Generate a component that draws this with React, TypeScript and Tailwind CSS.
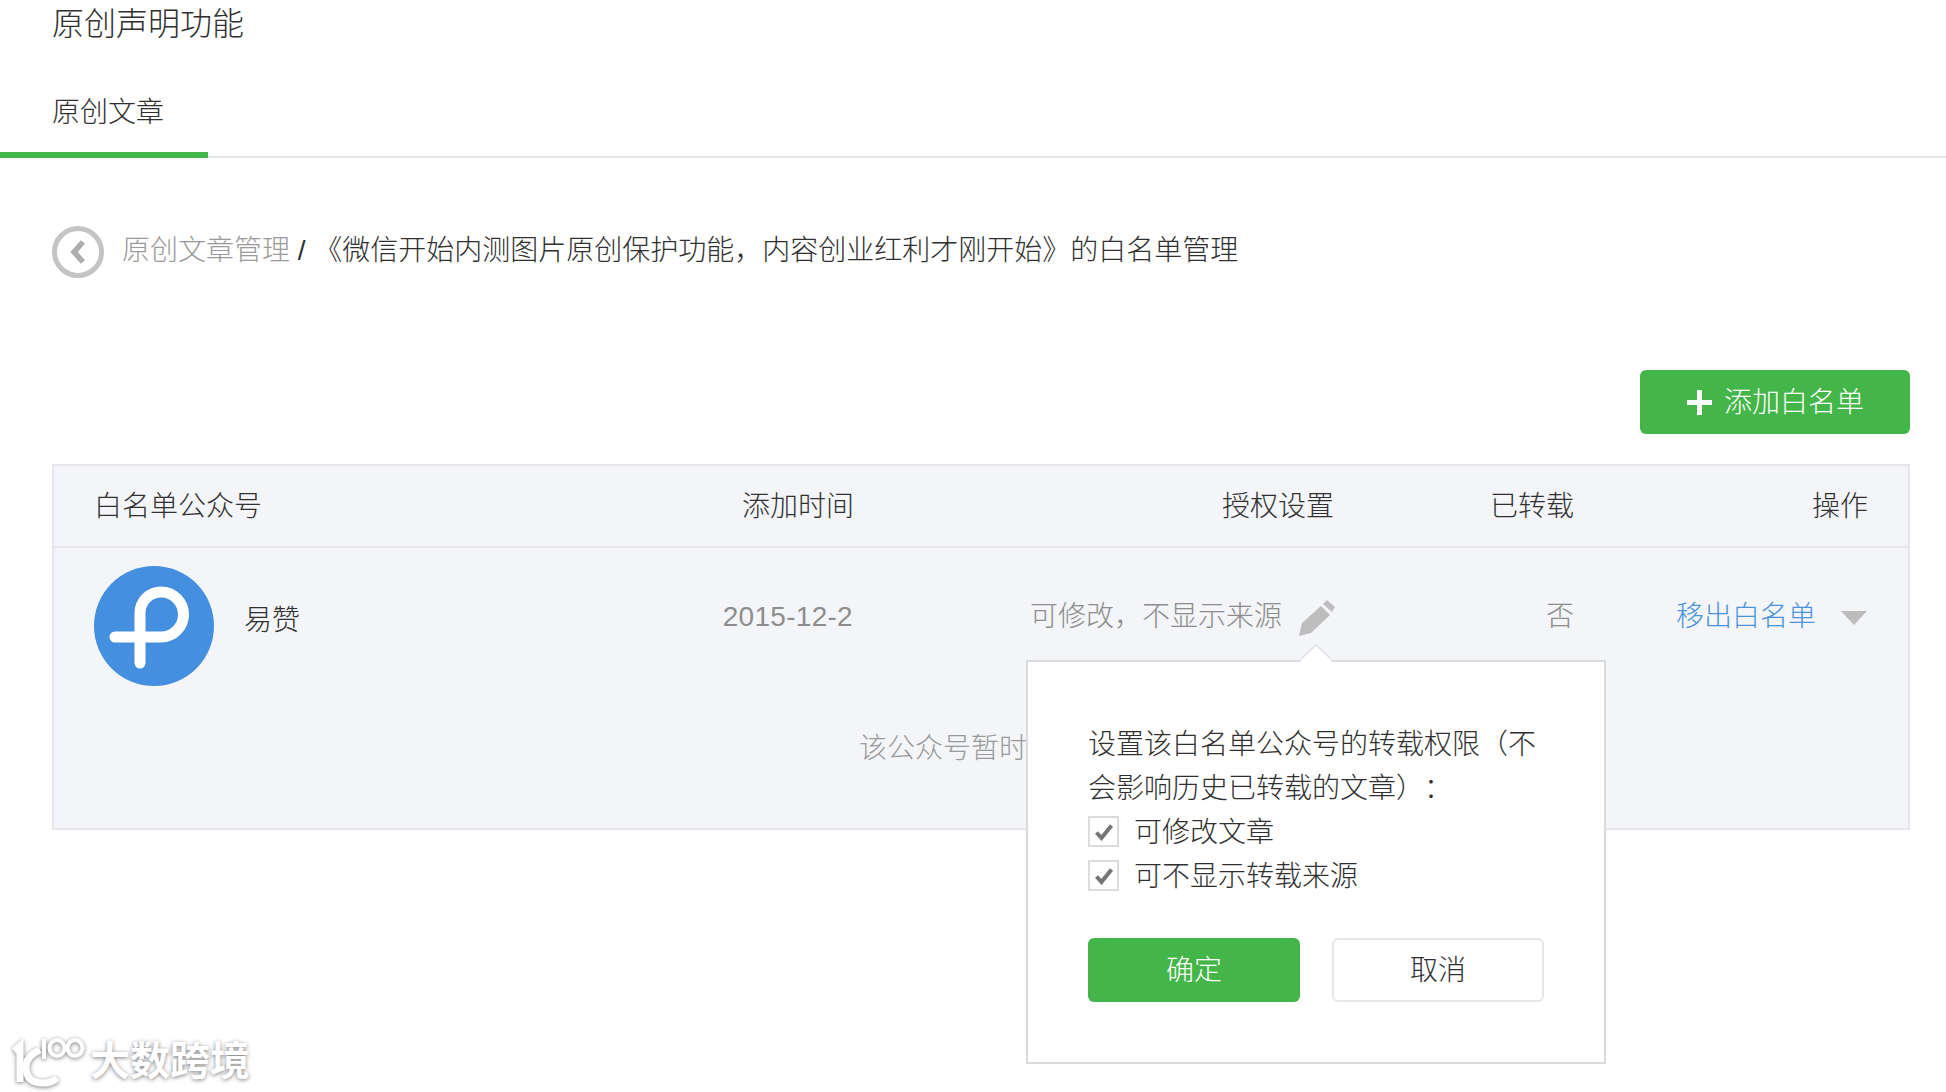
import React from "react";

function Check() {
  return (
    <span className="-mt-[3px] flex h-[31px] w-[31px] items-center justify-center border-2 border-[#dcdcdf] bg-white">
      <svg width="20" height="18" viewBox="0 0 20 18">
        <path d="M2.5 9.5 L7.5 15 L17.5 2.5" fill="none" stroke="#757575" strokeWidth="4" />
      </svg>
    </span>
  );
}

export default function App() {
  return (
    <div className="relative h-[1092px] w-[1946px] overflow-hidden bg-white font-['Liberation_Sans','Noto_Sans_CJK_SC',sans-serif] text-[28px] font-light text-[#303030] [text-spacing-trim:space-all]">
      <div className="h-[48px] pl-[52px] text-[32px] leading-[49px]">原创声明功能</div>
      <div className="h-[110px] border-b-2 border-[#e7e7eb]">
        <div className="h-[110px] w-[208px] border-b-[6px] border-[#44b549] pl-[52px] pt-[45px] leading-[40px]">原创文章</div>
      </div>

      <div className="mt-[68px] flex h-[52px] items-center pl-[52px]">
        <div className="flex h-[52px] w-[52px] items-center justify-center rounded-full border-[5px] border-[#c4c4c4]">
          <svg width="20" height="26" viewBox="0 0 20 26">
            <path d="M15 3 L6 13 L15 23" fill="none" stroke="#adadad" strokeWidth="5.5" />
          </svg>
        </div>
        <div className="-mt-[2px] ml-[18px] whitespace-pre leading-[40px]">
          <span className="text-[#9a9a9a]">原创文章管理</span>
          <span> / </span>
          <span className="ml-px">《微信开始内测图片原创保护功能，内容创业红利才刚开始》的白名单管理</span>
        </div>
      </div>

      <div className="mt-[92px] flex justify-end pr-[36px]">
        <div className="flex h-[64px] w-[270px] items-center justify-center gap-[12px] rounded-[6px] bg-[#44b549] pl-[1px] text-white">
          <svg width="25" height="25" viewBox="0 0 25 25">
            <path d="M10 0h5v10h10v5H15v10h-5V15H0v-5h10z" fill="#fff" />
          </svg>
          <span className="pt-px leading-[40px]">添加白名单</span>
        </div>
      </div>

      <div className="relative ml-[52px] mr-[36px] mt-[30px] h-[366px] border-2 border-[#e7e7eb] bg-[#f4f5f9]">
        <div className="grid h-[82px] grid-cols-[420px_380px_480px_240px_294px] items-center border-b-2 border-[#e7e7eb] pt-[2px] leading-[40px]">
          <div className="pl-[40px]">白名单公众号</div>
          <div className="text-right">添加时间</div>
          <div className="text-right">授权设置</div>
          <div className="text-right">已转载</div>
          <div className="text-right">操作</div>
        </div>

        <div className="grid grid-cols-[420px_379px_480px_241px_293px] items-start pt-[18px] leading-[40px] text-[#8d8d8d]">
          <div className="flex items-start pl-[40px]">
            <svg width="120" height="120" viewBox="0 0 120 120" className="shrink-0">
              <circle cx="60" cy="60" r="60" fill="#448fe0" />
              <path
                d="M21 71 H67 A22.5 22.5 0 0 0 67 26 A21 21 0 0 0 46 47 V97"
                fill="none"
                stroke="#fff"
                strokeWidth="11"
                strokeLinecap="round"
              />
            </svg>
            <span className="ml-[30px] mt-[35px] text-[#303030]">易赞</span>
          </div>
          <div className="mt-[31px] text-right tracking-[0.3px]">2015-12-2</div>
          <div className="mt-[31px] flex items-center justify-end gap-[17px]">
            <span>可修改，不显示来源</span>
            <svg width="36" height="36" viewBox="0 0 36 36" className="-mr-[2px] mt-[2px] shrink-0">
              <path d="M0 36 L3 23 L22 6 L31 15 L12 33 Z" fill="#bdbdbd" />
              <path d="M24 4 L28 0 L36 7 L33 12 Z" fill="#bdbdbd" />
            </svg>
          </div>
          <div className="mt-[31px] text-right">否</div>
          <div className="mt-[31px] flex items-center justify-end gap-[25px]">
            <span className="text-[#4a94dc]">移出白名单</span>
            <span className="mt-[2px] h-0 w-0 border-x-[13.5px] border-t-[14px] border-x-transparent border-t-[#bcbcbc]" />
          </div>
        </div>

        <div className="mt-[43px] pl-[805px] leading-[40px] text-[#9a9a9a]">该公众号暂时未转载</div>

        <div className="absolute left-[972px] top-[194px] h-[404px] w-[580px] border-2 border-[#d9dadc] bg-white pl-[60px] pr-[56px] pt-[61px]">
          <svg width="36" height="18" viewBox="0 0 36 18" className="absolute left-[270px] top-[-18px]">
            <path d="M1 17 L18 1 L35 17" fill="#fff" stroke="#e0e1e3" strokeWidth="1.5" />
            <rect x="3" y="16" width="30" height="2" fill="#fff" />
          </svg>
          <div className="leading-[44px]">设置该白名单公众号的转载权限（不会影响历史已转载的文章）：</div>
          <div className="flex h-[44px] items-center gap-[15px]">
            <Check />
            <span>可修改文章</span>
          </div>
          <div className="flex h-[44px] items-center gap-[15px]">
            <Check />
            <span>可不显示转载来源</span>
          </div>
          <div className="mt-[39px] flex gap-[32px]">
            <div className="flex h-[64px] w-[212px] items-center justify-center rounded-[6px] bg-[#44b549] pt-[2px] text-white">确定</div>
            <div className="flex h-[64px] w-[212px] items-center justify-center rounded-[6px] border-2 border-[#e7e7eb] bg-white pt-[2px]">取消</div>
          </div>
        </div>
      </div>

      <div className="absolute bottom-[5px] left-[12px] flex items-center gap-[2px]">
        <svg width="76" height="52" viewBox="0 0 76 52" className="[filter:drop-shadow(0_1px_2px_rgba(0,0,0,0.5))]">
          <path d="M2 16 L8 11 V47" fill="none" stroke="#fff" strokeWidth="7" />
          <path d="M28 15 Q14 21 14 32 Q14 48 31 48 Q40 48 45 43" fill="none" stroke="#fff" strokeWidth="7" />
          <path d="M32 4 V24" fill="none" stroke="#fff" strokeWidth="4" />
          <ellipse cx="45" cy="13" rx="7.5" ry="8" fill="none" stroke="#fff" strokeWidth="4" />
          <ellipse cx="63" cy="13" rx="7.5" ry="8" fill="none" stroke="#fff" strokeWidth="4" />
        </svg>
        <span className="text-[40px] font-bold leading-[50px] text-white [text-shadow:0_1px_4px_rgba(0,0,0,0.5)]">大数跨境</span>
      </div>
    </div>
  );
}
